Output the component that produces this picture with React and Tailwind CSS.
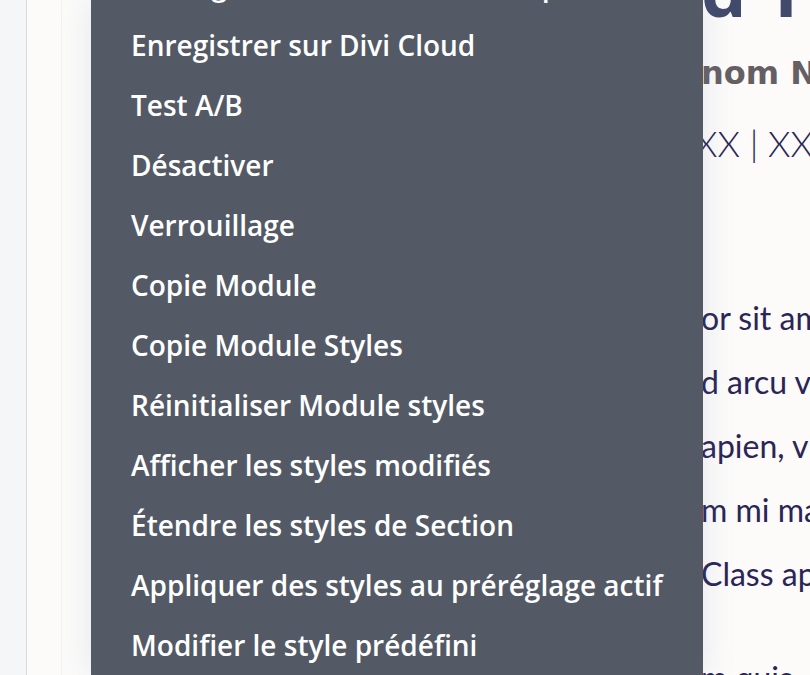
import React from "react";

const menuItems = [
  "Sauvegarder dans la bibliothèque",
  "Enregistrer sur Divi Cloud",
  "Test A/B",
  "Désactiver",
  "Verrouillage",
  "Copie Module",
  "Copie Module Styles",
  "Réinitialiser Module styles",
  "Afficher les styles modifiés",
  "Étendre les styles de Section",
  "Appliquer des styles au préréglage actif",
  "Modifier le style prédéfini",
];

const bodyLines = ["or sit amet,", "d arcu vel", "apien, vitae", "m mi magna", "Class aptent"];

export default function App() {
  return (
    <div className="relative w-[810px] h-[675px] overflow-hidden flex bg-[#f4f6f7]">
      {/* admin sidebar edge */}
      <div className="w-[27px] shrink-0 bg-[#f4f6f7] border-r border-[#d7d8dc]" />

      {/* page canvas */}
      <div className="flex-1 flex bg-[#fcfbfa]">
        <div className="w-[35px] shrink-0 border-r border-[#f4f1ef]" />
        <div className="flex-1 pl-[639px] overflow-hidden whitespace-nowrap">
          <h1
            className="mt-[-47px] h-[72px] text-[72px] leading-[72px] font-bold text-[#414a6b]"
            style={{ fontFamily: "'Open Sans', sans-serif" }}
          >
            d Titre
          </h1>
          <p
            className="mt-[28px] h-[40px] text-[32px] leading-[40px] font-bold text-[#655f63]"
            style={{ fontFamily: "'DejaVu Sans', sans-serif" }}
          >
            nom Nom
          </p>
          <p
            className="mt-[30px] ml-[-6px] h-[40px] text-[36px] leading-[40px] font-light text-[#2a2556]"
            style={{ fontFamily: "Lato, sans-serif" }}
          >
            XX | XX | XX
          </p>
          <div
            className="mt-[123px] text-[32px] leading-[64px] text-[#2a2556]"
            style={{ fontFamily: "Lato, sans-serif" }}
          >
            {bodyLines.map((l) => (
              <div key={l} className="h-[64px]">{l}</div>
            ))}
            <div className="mt-[40px] h-[64px]">m quis</div>
          </div>
        </div>
      </div>

      {/* right-click context menu */}
      <div className="absolute left-[91px] top-0 w-[612px] h-[675px] bg-[#535a66] shadow-[0_0_30px_rgba(120,140,170,0.18)] overflow-hidden">
        <ul className="mt-[-45px]" style={{ fontFamily: "'Open Sans', sans-serif" }}>
          {menuItems.map((item) => (
            <li
              key={item}
              className="h-[60px] px-10 flex items-center text-[28px] font-semibold text-white whitespace-nowrap"
            >
              {item}
            </li>
          ))}
        </ul>
      </div>
    </div>
  );
}
